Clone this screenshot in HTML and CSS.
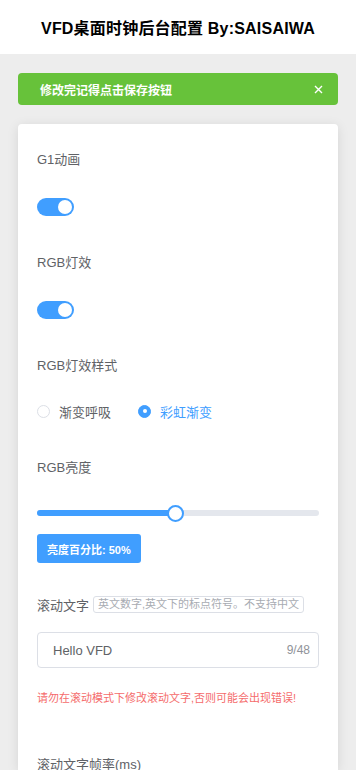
FILE: index.html
```html
<!DOCTYPE html>
<html lang="zh-CN">
<head>
<meta charset="utf-8">
<title>VFD桌面时钟后台配置</title>
<link rel="stylesheet" href="styles.css">
</head>
<body>
<header class="top">
  <h1 class="title">VFD桌面时钟后台配置 By:SAISAIWA</h1>
</header>
<main class="page">
  <div class="alert">
    <span class="alert-text">修改完记得点击保存按钮</span>
    <svg class="alert-close" width="9" height="9" viewBox="0 0 9 9"><path d="M1 1L8 8M8 1L1 8" stroke="#fff" stroke-width="1.4" fill="none"/></svg>
  </div>
  <div class="card">
    <div class="item">
      <div class="label">G1动画</div>
      <div class="switch-row"><span class="switch on"><span class="knob"></span></span></div>
    </div>
    <div class="item">
      <div class="label">RGB灯效</div>
      <div class="switch-row"><span class="switch on"><span class="knob"></span></span></div>
    </div>
    <div class="item item-radio">
      <div class="label">RGB灯效样式</div>
      <div class="radio-row">
        <label class="radio"><span class="radio-dot"></span><span class="radio-text">渐变呼吸</span></label>
        <label class="radio checked"><span class="radio-dot"></span><span class="radio-text">彩虹渐变</span></label>
      </div>
    </div>
    <div class="item item-slider">
      <div class="label">RGB亮度</div>
      <div class="slider">
        <div class="runway">
          <div class="bar" style="width: 49%"></div>
          <div class="thumb" style="left: 49%"></div>
        </div>
      </div>
      <button class="btn">亮度百分比: 50%</button>
    </div>
    <div class="item item-text">
      <div class="label-row"><span class="label-inline">滚动文字</span><span class="hint">英文数字,英文下的标点符号。不支持中文</span></div>
      <div class="input">
        <span class="input-value">Hello VFD</span>
        <span class="counter">9/48</span>
      </div>
      <div class="warn">请勿在滚动模式下修改滚动文字,否则可能会出现错误!</div>
    </div>
    <div class="item item-last">
      <div class="label">滚动文字帧率(ms)</div>
    </div>
  </div>
</main>
</body>
</html>
```
FILE: styles.css
```css
* { box-sizing: border-box; }
html, body {
  margin: 0;
  padding: 0;
  background: #ededed;
  font-family: "Liberation Sans", "Noto Sans CJK SC", sans-serif;
  color: #606266;
}
.top {
  height: 54px;
  background: #fff;
  display: flex;
  align-items: center;
  justify-content: center;
}
.title {
  margin: 0;
  font-size: 16px;
  font-weight: 700;
  color: #000;
  letter-spacing: 0.2px;
}
.page {
  padding: 19px 18px 0;
}
.alert {
  height: 32px;
  background: #67c23a;
  border-radius: 4px;
  display: flex;
  align-items: center;
  justify-content: space-between;
  padding: 0 15px 0 22px;
}
.alert-text {
  color: #fff;
  font-size: 12px;
  font-weight: 700;
}
.alert-close { display: block; }
.card {
  margin-top: 19px;
  background: #fff;
  border-radius: 4px 4px 0 0;
  box-shadow: 0 2px 12px 0 rgba(0, 0, 0, 0.1);
  padding: 26px 19px 0;
  height: 646px;
}
.item { margin-bottom: 37px; }
.item-last { margin-bottom: 0; }
.label {
  height: 20px;
  line-height: 20px;
  font-size: 13px;
  color: #606266;
}
.switch-row {
  margin-top: 28px;
  height: 18px;
}
.switch {
  display: block;
  position: relative;
  width: 37px;
  height: 18px;
  border-radius: 9px;
  background: #dcdfe6;
}
.switch.on { background: #409eff; }
.knob {
  position: absolute;
  top: 2px;
  right: 2px;
  width: 14px;
  height: 14px;
  border-radius: 50%;
  background: #fff;
}
.radio-row {
  margin-top: 25px;
  height: 20px;
  display: flex;
  align-items: center;
}
.radio {
  display: flex;
  align-items: center;
  margin-right: 27px;
  font-size: 13px;
  color: #606266;
}
.radio-dot {
  width: 13px;
  height: 13px;
  border-radius: 50%;
  border: 1px solid #dcdfe6;
  background: #fff;
  margin-right: 9px;
  display: flex;
  align-items: center;
  justify-content: center;
}
.radio.checked .radio-dot {
  background: #409eff;
  border-color: #409eff;
}
.radio.checked .radio-dot::after {
  content: "";
  width: 4px;
  height: 4px;
  border-radius: 50%;
  background: #fff;
}
.radio.checked { color: #409eff; }
.item-slider { margin-bottom: 33px; }
.slider {
  margin-top: 27px;
  height: 16px;
  display: flex;
  align-items: center;
}
.runway {
  position: relative;
  width: 100%;
  height: 6px;
  border-radius: 3px;
  background: #e4e7ed;
}
.bar {
  height: 6px;
  border-radius: 3px;
  background: #409eff;
}
.thumb {
  position: absolute;
  top: 50%;
  width: 17px;
  height: 17px;
  margin: -8.5px 0 0 -8px;
  border-radius: 50%;
  border: 2px solid #409eff;
  background: #fff;
}
.btn {
  display: block;
  margin-top: 13px;
  height: 29px;
  padding: 0 10px;
  border: 0;
  border-radius: 3px;
  background: #409eff;
  color: #fff;
  font-family: inherit;
  font-size: 11px;
  font-weight: 700;
}
.item-text { margin-bottom: 49px; }
.label-row {
  height: 17px;
  display: flex;
  align-items: center;
}
.label-inline {
  font-size: 13px;
  color: #606266;
  margin-right: 4px;
}
.hint {
  height: 17px;
  line-height: 15px;
  border: 1px solid #dcdfe6;
  border-radius: 3px;
  padding: 0 4px;
  font-size: 11px;
  color: #a8abb2;
  white-space: nowrap;
}
.input {
  margin-top: 19px;
  height: 36px;
  border: 1px solid #dcdfe6;
  border-radius: 4px;
  display: flex;
  align-items: center;
  justify-content: space-between;
  padding: 0 8px 0 15px;
}
.input-value {
  font-size: 13px;
  color: #606266;
}
.counter {
  font-size: 12px;
  color: #909399;
}
.warn {
  margin-top: 22px;
  height: 16px;
  line-height: 16px;
  font-size: 11px;
  color: #f56c6c;
}
```
